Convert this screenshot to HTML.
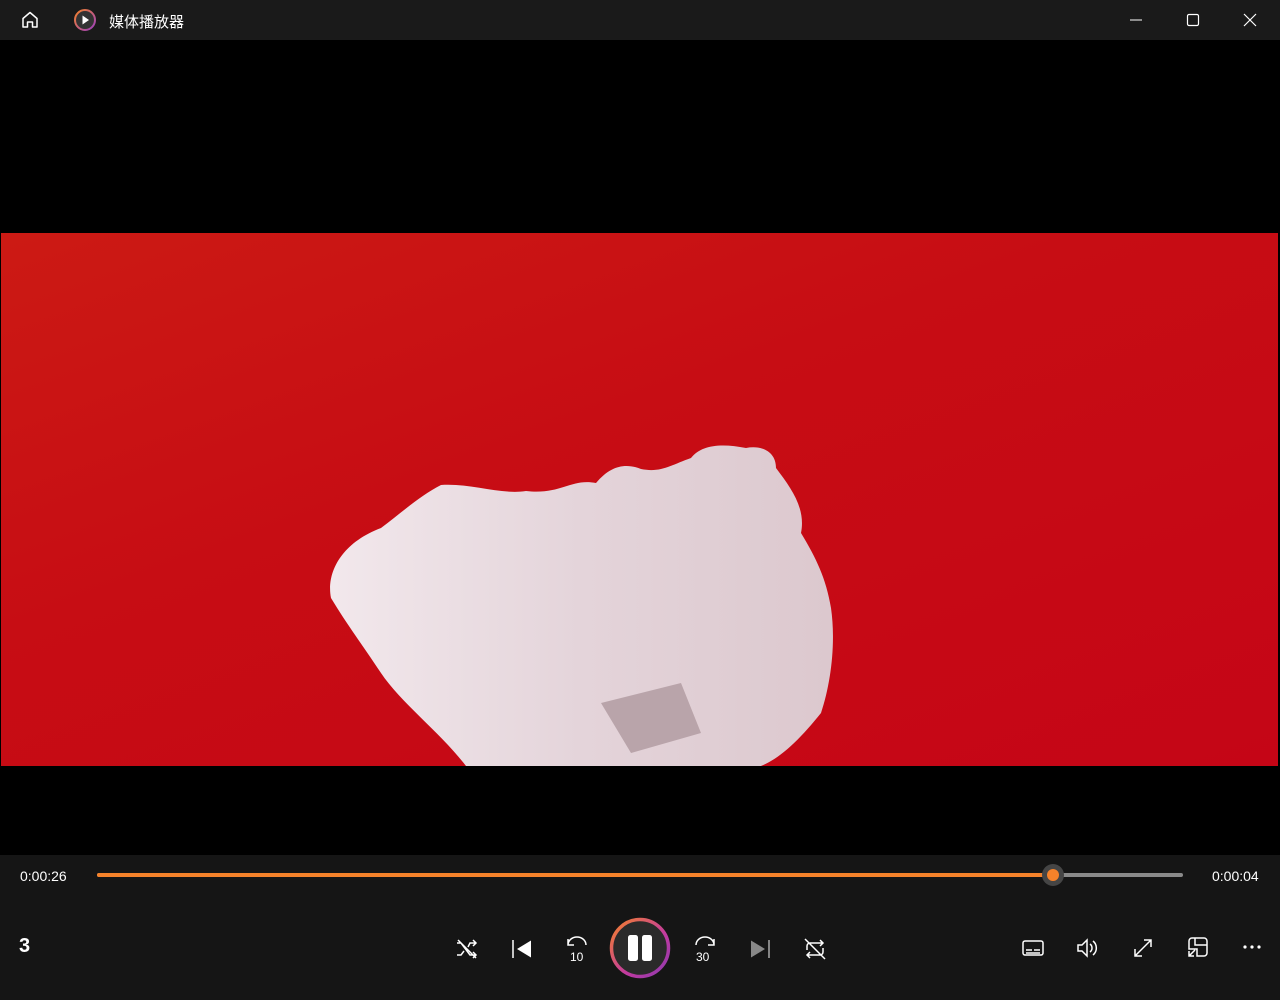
<!DOCTYPE html>
<html><head><meta charset="utf-8"><style>
*{margin:0;padding:0;box-sizing:border-box}
body{width:1280px;height:1000px;background:#000;overflow:hidden;font-family:"Liberation Sans","Noto Sans CJK SC",sans-serif;color:#fff;position:relative}
.title{position:absolute;left:0;top:0;width:1280px;height:40px;background:#1a1a1a}
.ctrl{position:absolute;left:0;top:855px;width:1280px;height:145px;background:#151515}
.video{position:absolute;left:1px;top:233px;width:1277px;height:533px;background:linear-gradient(160deg,#cc1a14 0%,#c70d14 40%,#c50516 100%)}
.t{position:absolute;font-size:14px}
svg{position:absolute}
</style></head><body>
<div class="title">
<svg style="left:20px;top:10px" width="20" height="20" viewBox="0 0 20 20" fill="none" stroke="#fff" stroke-width="1.5" stroke-linejoin="round"><path d="M3 8.5L10 2.5L17 8.5V17H12.5V12H7.5V17H3Z"/></svg>
<svg style="left:73px;top:8px" width="24" height="24" viewBox="0 0 24 24"><defs><linearGradient id="g1" x1="0" y1="0" x2="1" y2="1"><stop offset="0" stop-color="#f5822a"/><stop offset="1" stop-color="#9b3fc0"/></linearGradient></defs><circle cx="12" cy="12" r="10" fill="#333" stroke="url(#g1)" stroke-width="2"/><path d="M9.5 7.5L16 12L9.5 16.5Z" fill="#fff"/></svg>
<div class="t" style="left:109px;top:11px;font-size:15px">媒体播放器</div>
<svg style="left:1128px;top:12px" width="16" height="16"><path d="M2 8H14" stroke="#fff" stroke-width="1"/></svg>
<svg style="left:1185px;top:12px" width="16" height="16"><rect x="2.5" y="2.5" width="11" height="11" rx="1.5" fill="none" stroke="#fff" stroke-width="1.2"/></svg>
<svg style="left:1242px;top:12px" width="16" height="16"><path d="M2 2L14 14M14 2L2 14" stroke="#fff" stroke-width="1.2"/></svg>
</div>
<div class="video">
<svg style="left:0;top:0" width="1277" height="533" viewBox="0 0 1277 533"><defs><linearGradient id="tg" x1="0" y1="0" x2="1" y2="0"><stop offset="0" stop-color="#f2e8ec"/><stop offset=".5" stop-color="#e4d4da"/><stop offset="1" stop-color="#dcc8ce"/></linearGradient></defs><path d="M465 533C440 500 400 470 380 440C360 410 345 390 330 365C325 340 340 310 380 295C400 280 420 262 440 252C470 250 500 262 525 258C560 262 570 245 595 250C610 232 625 230 640 236C660 240 670 232 690 225C700 212 720 210 745 215C760 212 775 218 775 235C790 255 805 275 800 300C815 325 825 345 830 375C835 410 830 450 820 480C800 505 780 525 760 533Z" fill="url(#tg)"/><path d="M600 470L680 450L700 500L630 520Z" fill="#b9a4aa"/></svg>
</div>
<div class="ctrl">
<div class="t" style="left:20px;top:13px">0:00:26</div>
<div class="t" style="left:1212px;top:13px">0:00:04</div>
<div style="position:absolute;left:97px;top:18px;width:1086px;height:4px;border-radius:2px;background:#8a8a8a"></div>
<div style="position:absolute;left:97px;top:18px;width:956px;height:4px;border-radius:2px;background:#f5822a"></div>
<div style="position:absolute;left:1042px;top:9px;width:22px;height:22px;border-radius:50%;background:#454545"></div>
<div style="position:absolute;left:1047px;top:14px;width:12px;height:12px;border-radius:50%;background:#f5822a"></div>
<div class="t" style="left:19px;top:80px;font-size:20px;font-weight:bold">3</div>
<svg style="left:455px;top:82px" width="24" height="24" fill="none" stroke="#fff" stroke-width="1.5"><path d="M2 6H6L15 18H21M2 18H6L9 14M13 10L15 6H21M18 3L21 6L18 9M18 15L21 18L18 21M3 3L21 21"/></svg>
<svg style="left:510px;top:82px" width="24" height="24"><path d="M3 3V21" stroke="#fff" stroke-width="1.5"/><path d="M21 3.5V20.5L7 12Z" fill="#fff"/></svg>
<svg style="left:564px;top:80px" width="26" height="28" fill="none" stroke="#fff" stroke-width="1.5"><path d="M4 10A9 8 0 0 1 22 10M4 4V10H10"/><text x="6" y="26" fill="#fff" stroke="none" font-size="12" font-family="Liberation Sans">10</text></svg>
<svg style="left:609px;top:62px" width="62" height="62"><defs><linearGradient id="g2" x1="0" y1="0" x2="1" y2="1"><stop offset="0" stop-color="#f5822a"/><stop offset=".6" stop-color="#c23aa0"/><stop offset="1" stop-color="#8b3ab0"/></linearGradient></defs><circle cx="31" cy="31" r="28.5" fill="#2a2a2a" stroke="url(#g2)" stroke-width="3.5"/><rect x="19" y="18" width="10" height="26" rx="2.5" fill="#fff"/><rect x="33" y="18" width="10" height="26" rx="2.5" fill="#fff"/></svg>
<svg style="left:692px;top:80px" width="26" height="28" fill="none" stroke="#fff" stroke-width="1.5"><path d="M22 10A9 8 0 0 0 4 10M22 4V10H16"/><text x="4" y="26" fill="#fff" stroke="none" font-size="12" font-family="Liberation Sans">30</text></svg>
<svg style="left:748px;top:82px" width="24" height="24"><path d="M3 3.5V20.5L17 12Z" fill="#888"/><path d="M21 3V21" stroke="#aaa" stroke-width="1.5"/></svg>
<svg style="left:802px;top:81px" width="26" height="26" fill="none" stroke="#fff" stroke-width="1.5"><path d="M5 14V10A3 3 0 0 1 8 7H21M18 4L21 7L18 10M21 12V16A3 3 0 0 1 18 19H5M8 16L5 19L8 22M3 3L23 23"/></svg>
<svg style="left:1021px;top:83px" width="24" height="20" fill="none" stroke="#fff" stroke-width="1.5"><rect x="2" y="3" width="20" height="14" rx="2"/><path d="M5 12H11M13 12H19M5 15H19"/></svg>
<svg style="left:1075px;top:81px" width="26" height="24" fill="none" stroke="#fff" stroke-width="1.5"><path d="M3 9H7L12 4V20L7 15H3Z M15 8A5 5 0 0 1 15 16M18 5A9 9 0 0 1 18 19"/></svg>
<svg style="left:1131px;top:81px" width="24" height="24" fill="none" stroke="#fff" stroke-width="1.5"><path d="M4 20L20 4M13 4H20V11M4 13V20H11"/></svg>
<svg style="left:1186px;top:80px" width="24" height="24" fill="none" stroke="#fff" stroke-width="1.5"><path d="M9 3H18A3 3 0 0 1 21 6V18A3 3 0 0 1 18 21H11V14H3V6A3 3 0 0 1 6 3H9V10H21M3 21L9 15M3 16V21H8"/></svg>
<svg style="left:1242px;top:88px" width="20" height="8" fill="#fff"><circle cx="3" cy="4" r="1.6"/><circle cx="10" cy="4" r="1.6"/><circle cx="17" cy="4" r="1.6"/></svg>
</div>
</body></html>
